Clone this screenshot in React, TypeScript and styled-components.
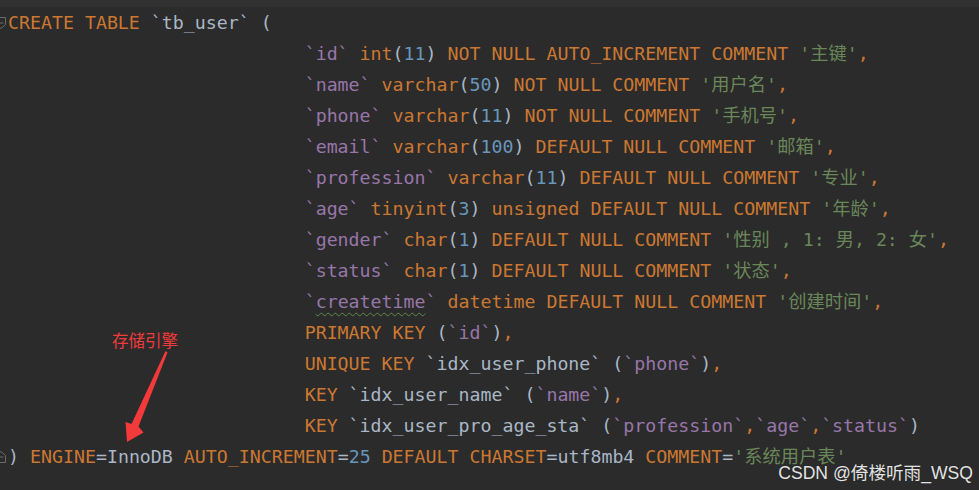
import React from "react";
import styled, { createGlobalStyle } from "styled-components";

const GlobalStyle = createGlobalStyle`
  html, body { margin: 0; padding: 0; background: #2b2b2b; }
`;

type Tok = "k" | "i" | "w" | "t" | "n" | "s" | "p" | "c";

const colors: Record<Tok, string> = {
  k: "#cc7832",
  i: "#9876aa",
  w: "#9876aa",
  t: "#a9b7c6",
  n: "#6897bb",
  s: "#6a8759",
  p: "#a9b7c6",
  c: "#cc7832",
};

const Editor = styled.div`
  position: relative;
  width: 979px;
  height: 490px;
  overflow: hidden;
  background: #2b2b2b;
`;

const TopBand = styled.div`
  height: 7px;
  background: #313131;
`;

const Code = styled.div`
  font-family: "DejaVu Sans Mono", "Noto Sans CJK SC", monospace;
  font-size: 18.25px;
  line-height: 31px;
`;

const Line = styled.div`
  display: flex;
  height: 31px;
  white-space: pre;
`;

const Gutter = styled.div`
  flex: none;
  width: 8px;
  display: flex;
  align-items: center;
  overflow: hidden;
`;

const Text = styled.div<{ $indent: number }>`
  padding-left: ${(p) => p.$indent}ch;
`;

const T = styled.span<{ $t: Tok }>`
  color: ${(p) => colors[p.$t]};
  ${(p) =>
    p.$t === "w"
      ? `text-decoration: underline wavy #5e8a4a; text-decoration-thickness: 1px; text-underline-offset: 4px;`
      : ""}
`;

const Note = styled.div`
  position: absolute;
  left: 112px;
  top: 329px;
  font-family: "Noto Sans CJK SC", sans-serif;
  font-size: 16.5px;
  line-height: 22px;
  color: #f23a3a;
`;

const ArrowSvg = styled.svg`
  position: absolute;
  left: 0;
  top: 0;
  pointer-events: none;
`;

const Watermark = styled.div`
  position: absolute;
  right: 6px;
  bottom: 6px;
  font-family: "Liberation Sans", "Noto Sans CJK SC", sans-serif;
  font-size: 17.6px;
  line-height: 22px;
  color: #e4e4e4;
  text-shadow: 0 0 1px rgba(0, 0, 0, 0.4);
`;

const FoldIcon = ({ up }: { up?: boolean }) => (
  <svg width="14" height="14" viewBox="0 0 14 14" style={{ marginLeft: -6, flex: "none" }}>
    {up ? (
      <path d="M2.5 12.5 V5.5 L7 1.5 L11.5 5.5 V12.5 Z" fill="none" stroke="#6a6a6a" strokeWidth="1" />
    ) : (
      <path d="M2.5 1.5 V8.5 L7 12.5 L11.5 8.5 V1.5 Z" fill="none" stroke="#6a6a6a" strokeWidth="1" />
    )}
    <path d="M4.5 7 H9.5" stroke="#6a6a6a" strokeWidth="1" />
  </svg>
);

type L = { indent: number; fold?: "down" | "up"; toks: [Tok, string][] };

const col = (name: string, type: [Tok, string][], rest: string, comment: string): L => ({
  indent: 27,
  toks: [["i", "`" + name + "`"], ["p", " "], ...type, ["k", " " + rest + " "], ["s", "'" + comment + "'"], ["c", ","]],
});

const lines: L[] = [
  { indent: 0, fold: "down", toks: [["k", "CREATE TABLE "], ["t", "`tb_user`"], ["p", " ("]] },
  col("id", [["k", "int"], ["p", "("], ["n", "11"], ["p", ")"]], "NOT NULL AUTO_INCREMENT COMMENT", "主键"),
  col("name", [["k", "varchar"], ["p", "("], ["n", "50"], ["p", ")"]], "NOT NULL COMMENT", "用户名"),
  col("phone", [["k", "varchar"], ["p", "("], ["n", "11"], ["p", ")"]], "NOT NULL COMMENT", "手机号"),
  col("email", [["k", "varchar"], ["p", "("], ["n", "100"], ["p", ")"]], "DEFAULT NULL COMMENT", "邮箱"),
  col("profession", [["k", "varchar"], ["p", "("], ["n", "11"], ["p", ")"]], "DEFAULT NULL COMMENT", "专业"),
  col("age", [["k", "tinyint"], ["p", "("], ["n", "3"], ["p", ")"], ["k", " unsigned"]], "DEFAULT NULL COMMENT", "年龄"),
  col("gender", [["k", "char"], ["p", "("], ["n", "1"], ["p", ")"]], "DEFAULT NULL COMMENT", "性别 , 1: 男, 2: 女"),
  col("status", [["k", "char"], ["p", "("], ["n", "1"], ["p", ")"]], "DEFAULT NULL COMMENT", "状态"),
  {
    indent: 27,
    toks: [["i", "`"], ["w", "createtime"], ["i", "`"], ["k", " datetime DEFAULT NULL COMMENT "], ["s", "'创建时间'"], ["c", ","]],
  },
  { indent: 27, toks: [["k", "PRIMARY KEY "], ["p", "("], ["i", "`id`"], ["p", ")"], ["c", ","]] },
  {
    indent: 27,
    toks: [["k", "UNIQUE KEY "], ["t", "`idx_user_phone`"], ["p", " ("], ["i", "`phone`"], ["p", ")"], ["c", ","]],
  },
  { indent: 27, toks: [["k", "KEY "], ["t", "`idx_user_name`"], ["p", " ("], ["i", "`name`"], ["p", ")"], ["c", ","]] },
  {
    indent: 27,
    toks: [
      ["k", "KEY "],
      ["t", "`idx_user_pro_age_sta`"],
      ["p", " ("],
      ["i", "`profession`"],
      ["c", ","],
      ["i", "`age`"],
      ["c", ","],
      ["i", "`status`"],
      ["p", ")"],
    ],
  },
  {
    indent: 0,
    fold: "up",
    toks: [
      ["p", ")"],
      ["k", " ENGINE"],
      ["p", "=InnoDB"],
      ["k", " AUTO_INCREMENT"],
      ["p", "="],
      ["n", "25"],
      ["k", " DEFAULT CHARSET"],
      ["p", "=utf8mb4"],
      ["k", " COMMENT"],
      ["p", "="],
      ["s", "'系统用户表'"],
    ],
  },
];

export default function App() {
  return (
    <>
      <GlobalStyle />
      <Editor>
        <TopBand />
        <Code>
          {lines.map((l, idx) => (
            <Line key={idx}>
              <Gutter>{l.fold && <FoldIcon up={l.fold === "up"} />}</Gutter>
              <Text $indent={l.indent}>
                {l.toks.map(([t, s], j) => (
                  <T key={j} $t={t}>
                    {s}
                  </T>
                ))}
              </Text>
            </Line>
          ))}
        </Code>
        <Note>存储引擎</Note>
        <ArrowSvg width="979" height="490" viewBox="0 0 979 490">
          <polygon
            points="165.5,351 167.5,352.5 138.5,426.5 143.5,432.5 127,442 125.5,422 131.5,424 "
            fill="#f23a3a"
          />
        </ArrowSvg>
        <Watermark>CSDN @倚楼听雨_WSQ</Watermark>
      </Editor>
    </>
  );
}
